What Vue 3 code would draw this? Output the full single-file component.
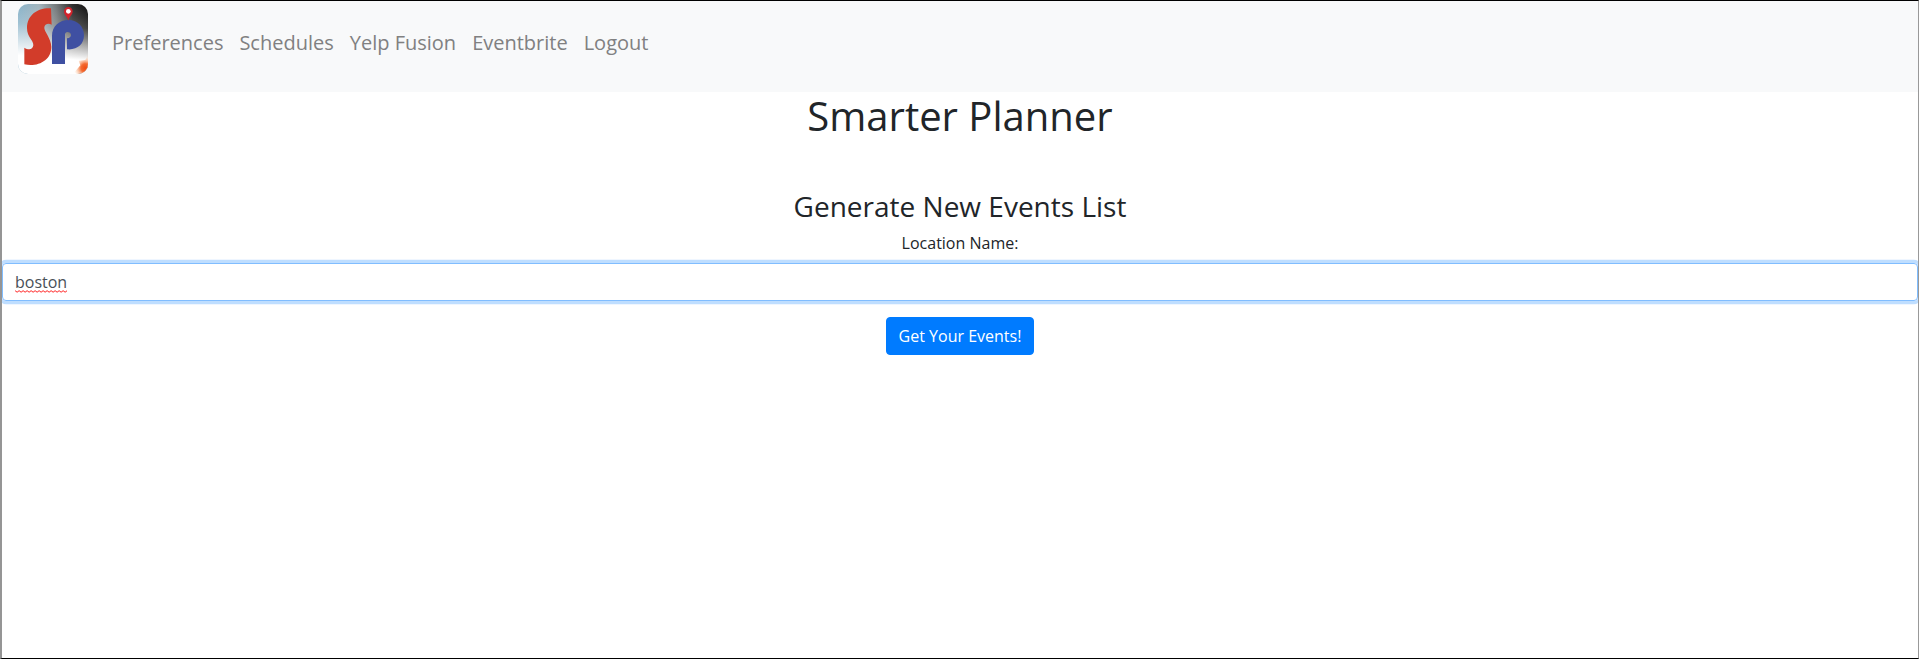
<script setup>
import { ref } from 'vue'

const links = ['Preferences', 'Schedules', 'Yelp Fusion', 'Eventbrite', 'Logout']
const location = ref('boston')
</script>

<template>
  <div class="page">
    <nav class="navbar">
      <svg class="logo" viewBox="0 0 210 210" aria-label="SP">
        <defs>
          <linearGradient id="sky" x1="0" y1="0" x2="1" y2="0">
            <stop offset="0" stop-color="#86b1c8" />
            <stop offset="0.3" stop-color="#a0b4bd" />
            <stop offset="0.55" stop-color="#74787a" />
            <stop offset="0.78" stop-color="#303030" />
            <stop offset="1" stop-color="#151515" />
          </linearGradient>
          <linearGradient id="fade" x1="0.4" y1="0" x2="0.32" y2="1">
            <stop offset="0" stop-color="#fff" stop-opacity="0" />
            <stop offset="0.3" stop-color="#fff" stop-opacity="0.2" />
            <stop offset="0.76" stop-color="#fff" stop-opacity="1" />
          </linearGradient>
          <radialGradient id="flare" cx="202" cy="192" r="32" gradientUnits="userSpaceOnUse">
            <stop offset="0" stop-color="#f04d13" />
            <stop offset="0.4" stop-color="#f46a30" />
            <stop offset="1" stop-color="#fbc9a0" stop-opacity="0.2" />
          </radialGradient>
          <clipPath id="tile"><rect width="210" height="210" rx="30" /></clipPath>
        </defs>
        <g clip-path="url(#tile)">
          <rect width="210" height="210" fill="url(#sky)" />
          <rect width="210" height="210" fill="url(#fade)" />
          <path d="M210 152L202 168L182 170L187 184L170 204L176 210H210Z" fill="url(#flare)" />
        </g>
        <path class="red" d="M99 13C62 10 27 31 27 72C27 100 47 108 46 124C44 139 30 138 19 131V181C59 190 101 169 100 128C99 101 77 82 79 69C82 58 93 58 101 62Z" />
        <path class="blue" d="M102 180V96C102 66 125 48 151 48C180 48 198 69 198 94C198 121 177 139 147 136V103C155 103 159 98 159 93C159 87 154 84 149 84C143 84 140 89 141 95V180Z" />
        <path class="pin" d="M151 50C148 37 138 33 138 22A13 13 0 0 1 164 22C164 33 154 37 151 50Z" />
        <circle cx="151" cy="22" r="7" fill="#fff" />
      </svg>
      <ul class="links">
        <li v-for="link in links" :key="link"><a>{{ link }}</a></li>
      </ul>
    </nav>
    <main>
      <h1>Smarter Planner</h1>
      <h3>Generate New Events List</h3>
      <form @submit.prevent>
        <label>Location Name:</label>
        <div class="field">
          <span class="value">{{ location }}<svg class="squiggle" viewBox="0 0 52 3"><path d="M0 .7L2 2.2L4 .7L6 2.2L8 .7L10 2.2L12 .7L14 2.2L16 .7L18 2.2L20 .7L22 2.2L24 .7L26 2.2L28 .7L30 2.2L32 .7L34 2.2L36 .7L38 2.2L40 .7L42 2.2L44 .7L46 2.2L48 .7L50 2.2L52 .7" /></svg></span>
        </div>
        <button type="submit">Get Your Events!</button>
      </form>
    </main>
  </div>
</template>

<style>
body {
  margin: 0;
}
</style>

<style scoped>
.page {
  box-sizing: border-box;
  height: 659px;
  overflow: hidden;
  border: solid;
  border-width: 1px 1px 1px 2px;
  border-color: #000 #999 #000 #959595;
  background: #fff;
  color: #212529;
  font: 16px/24px "Open Sans", "Noto Sans", sans-serif;
}
.navbar {
  box-sizing: border-box;
  display: flex;
  align-items: flex-start;
  height: 91px;
  padding: 3px 16px 0;
  background: #f8f9fa;
}
.logo {
  width: 70px;
  height: 70px;
}
.red {
  fill: #d23c2a;
}
.blue {
  fill: #3f50a2;
}
.pin {
  fill: #d3232b;
}
.links {
  display: flex;
  gap: 16px;
  margin: 24px 0 0 24px;
  padding: 0;
  list-style: none;
  font-size: 20px;
  line-height: 30px;
  color: #808081;
}
main {
  text-align: center;
}
h1,
h3 {
  margin: 0;
  font-weight: 400;
  line-height: 1.2;
}
h1 {
  font-size: 40px;
}
h3 {
  margin: 50px 0 7px;
  font-size: 28px;
}
label {
  display: block;
  margin-bottom: 8px;
}
.field {
  box-sizing: border-box;
  height: 38px;
  margin-bottom: 16px;
  padding: 6px 12px;
  border: 1px solid #80bdff;
  border-radius: 4px;
  box-shadow: 0 0 0 3.2px rgba(0, 123, 255, 0.25);
  color: #495057;
  text-align: left;
}
.value {
  position: relative;
  display: inline-block;
}
.squiggle {
  position: absolute;
  left: 0;
  bottom: 1px;
  width: 100%;
  height: 3px;
}
.squiggle path {
  fill: none;
  stroke: #f22;
  stroke-width: 1;
}
button {
  display: block;
  height: 38px;
  margin: 0 auto;
  padding: 6px 12px;
  border: 1px solid #007bff;
  border-radius: 4px;
  background: #007bff;
  color: #fff;
  font: inherit;
}
</style>
